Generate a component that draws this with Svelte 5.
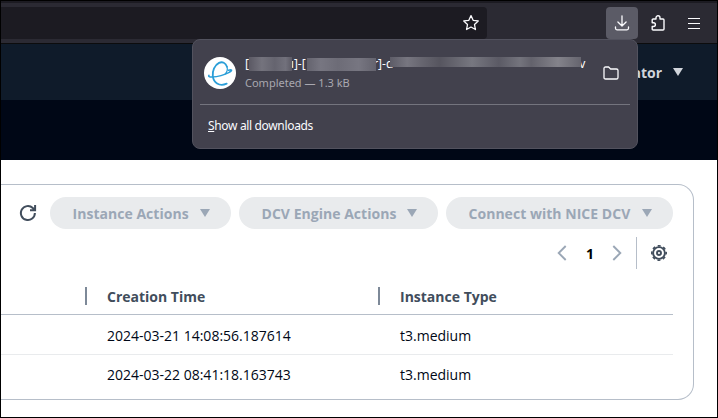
<script>
  const actions = [
    { label: 'Instance Actions', width: 181 },
    { label: 'DCV Engine Actions', width: 199 },
    { label: 'Connect with NICE DCV', width: 227 }
  ];
  const rows = [
    { created: '2024-03-21 14:08:56.187614', type: 't3.medium' },
    { created: '2024-03-22 08:41:18.163743', type: 't3.medium' }
  ];
</script>

<div class="window">
  <div class="toolbar">
    <div class="urlbar">
      <svg width="18" height="18" viewBox="0 0 18 18" fill="none" stroke="#fbfbfe" stroke-width="1.3" stroke-linejoin="round"><path d="M9 1.6l2.15 4.7 5.1.65-3.75 3.55.95 5.05L9 13.05l-4.45 2.5.95-5.05L1.75 6.95l5.1-.65z" /></svg>
    </div>
    <div class="tools">
      <div class="tool active">
        <svg width="16" height="16" viewBox="0 0 16 16" fill="none" stroke="#fbfbfe" stroke-width="1.3" stroke-linecap="round" stroke-linejoin="round"><path d="M8 .8v10M3.9 7L8 11l4.1-4M1.5 12v1.3q0 1.5 1.5 1.5h10q1.5 0 1.5-1.5V12" /></svg>
      </div>
      <div class="tool">
        <svg width="16" height="16" viewBox="0 0 16 16" fill="none" stroke="#fbfbfe" stroke-width="1.4" stroke-linejoin="round"><path d="M2.2 6V5q0-1 1-1H6V2.8a2 2 0 014 0V4h3q1 0 1 1v9q0 1-1 1H3.2q-1 0-1-1v-2.500h1.300a1.900 1.900 0 000-3.800H2.200z" /></svg>
      </div>
      <div class="tool menu"><i></i><i></i><i></i></div>
    </div>
  </div>

  <div class="appbar"><span>Administrator</span><b class="caret"></b></div>
  <div class="band"></div>

  <main>
    <section class="card">
      <div class="actions">
        <svg class="refresh" width="18" height="18" viewBox="0 0 18 18" fill="none" stroke="#414d5c" stroke-width="2"><path d="M15.900 9A7 7 0 1 1 13.800 4.050L16 6.200M16.100 1v5.200H11" /></svg>
        {#each actions as action}
          <button disabled style="width:{action.width}px"><span>{action.label}</span><b class="caret"></b></button>
        {/each}
      </div>
      <div class="pager">
        <svg width="10" height="16" viewBox="0 0 10 16" fill="none" stroke="#9ba7b6" stroke-width="1.9"><path d="M8.700 1L1.700 8l7 7" /></svg>
        <strong>1</strong>
        <svg width="10" height="16" viewBox="0 0 10 16" fill="none" stroke="#9ba7b6" stroke-width="1.9"><path d="M1.300 1l7 7-7 7" /></svg>
        <i class="rule"></i>
        <svg width="16" height="16" viewBox="0 0 16 16" fill="none" stroke="#414d5c">
          <circle cx="8" cy="8" r="5.900" stroke-width="1.900" />
          <circle cx="8" cy="8" r="7.200" stroke-width="1.600" stroke-dasharray="3 2.655" stroke-dashoffset="1.500" />
          <circle cx="8" cy="8" r="2" stroke-width="1.900" />
        </svg>
      </div>
      <div class="table">
        <div class="row head"><span>Creation Time</span><span>Instance Type</span></div>
        {#each rows as row}
          <div class="row"><span>{row.created}</span><span>{row.type}</span></div>
        {/each}
      </div>
    </section>
  </main>

  <aside class="downloads">
    <div class="item">
      <svg width="32" height="32" viewBox="0 0 32 32">
        <circle cx="16" cy="16" r="16" fill="#fff" />
        <g fill="none" stroke="#2a9ed8" stroke-linecap="round">
          <path d="M5 18.200C2.800 20.700 11 20.500 17 18.600C22.500 16.800 28.500 14.300 27.500 13Q26.800 12.500 24.500 13.300" stroke-width="1.500" />
          <path d="M23 9.800C21.500 5.800 18.500 4.300 15 5.900C10.500 8.200 8.300 14 8.800 19C9.500 25.500 15 30 22.700 26.700" stroke-width="1.800" />
          <path d="M23 9.800C23.800 12.500 23 15 21.200 16.800" stroke-width="1.200" />
        </g>
      </svg>
      <div class="copy">
        <div class="filename"><span>[</span><i class="blur first"></i><span>u</span><span>]-[</span><i class="blur second"></i><span>r</span><span>]-</span><span>d</span><i class="blur third"></i><span>v</span></div>
        <div class="status">Completed — 1.3 kB</div>
      </div>
      <svg class="folder" width="16" height="14" viewBox="0 0 16 14" fill="none" stroke="#fbfbfe" stroke-width="1.300" stroke-linejoin="round"><path d="M1 2.600Q1 1 2.600 1h3l2 2h5.800Q15 3 15 4.600v6.800q0 1.600-1.600 1.600H2.600Q1 13 1 11.400z" /></svg>
    </div>
    <div class="all"><u>S</u>how all downloads</div>
  </aside>
</div>

<style>
  :global(body) { margin: 0; overflow: hidden; }
  * { box-sizing: border-box; }
  svg { display: block; flex: none; }
  .window { position: relative; width: 718px; height: 418px; border: 1px solid #000; background: #fff; overflow: hidden; font-family: "Open Sans", "Noto Sans", sans-serif; font-size: 14px; }
  .toolbar { height: 43px; display: flex; justify-content: space-between; padding-top: 4px; background: #2b2a33; border-top: 2px solid #1c1b22; border-bottom: 1px solid #0c0c0d; }
  .urlbar { width: 486px; height: 32px; display: flex; align-items: center; justify-content: flex-end; padding-right: 7px; background: #1c1b22; border-radius: 0 4px 4px 0; }
  .tools { display: flex; gap: 4px; padding-right: 7px; }
  .tool { width: 32px; height: 32px; display: grid; place-items: center; border-radius: 4px; }
  .active { background: #5b5b66; }
  .menu { align-content: center; gap: 4px; }
  .menu i { width: 12px; height: 1px; background: #fbfbfe; }
  .appbar { height: 56px; display: flex; align-items: center; justify-content: flex-end; gap: 11px; padding-right: 34px; background: #0f1b2a; color: #d1d5db; font-weight: 700; }
  .caret { width: 0; height: 0; border: 5px solid transparent; border-top: 8px solid currentColor; border-bottom: 0; }
  .band { height: 60px; background: #000716; }
  main { padding: 24px 23px 0 0; }
  .card { height: 216px; border: 1px solid #b6bec9; border-left: 0; border-radius: 0 16px 16px 0; padding: 12px 20px 0 0; }
  .actions { height: 32px; display: flex; align-items: center; justify-content: flex-end; gap: 8px; }
  .refresh { margin-right: 5px; }
  button { height: 32px; display: flex; align-items: center; justify-content: space-between; padding: 0 21px 0 22.5px; border: 0; border-radius: 16px; background: #e9ebed; color: #9ba7b6; font: 700 14px "Open Sans", "Noto Sans", sans-serif; letter-spacing: .03px; white-space: nowrap; }
  .pager { height: 32px; margin-top: 8px; display: flex; align-items: center; justify-content: flex-end; padding-right: 6px; }
  .pager strong { width: 45px; text-align: center; padding: 1px 0 0 1px; }
  .rule { width: 1px; height: 32px; background: #b6bec9; margin: 0 14px; }
  .table { margin-top: 10px; color: #000716; }
  .row { height: 39px; display: flex; align-items: center; border-top: 1px solid #e9ebed; }
  .row span { width: 293px; padding-left: 20px; }
  .row span:first-child { margin-left: 86px; }
  .row.head { height: 35px; padding-bottom: 1px; border: 0; color: #414d5c; font-weight: 700; }
  .row.head span { border-left: 2px solid #7d8998; height: 18px; line-height: 20px; }
  .row.head span:first-child { margin-left: 84px; }
  .row.head + .row { height: 40px; padding-top: 2px; border-top-color: #b6bec9; }
  .downloads { position: absolute; left: 191px; top: 38px; width: 446px; height: 110px; padding: 0 7px; background: #42414d; border: 1px solid #52525e; border-radius: 8px; color: #fbfbfe; font-family: "Noto Sans", sans-serif; font-size: 12px; }
  .item { height: 65px; display: flex; align-items: center; padding: 2px 11px 0 4px; border-bottom: 1px solid #74747e; }
  .copy { width: 342px; margin-left: 9px; padding-top: 2px; }
  .filename { display: flex; height: 18px; line-height: 16px; }
  .filename span { flex: none; }
  .blur { flex: none; height: 13px; filter: blur(.3px); }
  .first { width: 43px; height: 14px; margin: 1px -5.500px 0 0; background: linear-gradient(90deg, #5b5964, #74737d 30%, #65646f 60%, #72717c 85%, #5b5964); }
  .second { width: 69px; margin: 2px -2.500px 0 1px; background: linear-gradient(90deg, #64636e, #777681 20%, #6d6c77 45%, #777681 75%, #64636e); }
  .third { width: 191px; height: 10px; margin: 1px -1.500px 0 -3.500px; background: linear-gradient(90deg, #5d5c67, #777680 9%, #66656f 17%, #56555f 26%, #777780 43%, #5b5a65 57%, #74747d 68%, #63626c 74%, #84838b 88%, #65646e); }
  .status { height: 18px; line-height: 18px; color: #a9a8b0; font-size: 11px; }
  .folder { margin-left: auto; }
  .all { padding: 13px 8px; line-height: 16px; letter-spacing: -.34px; }
</style>
